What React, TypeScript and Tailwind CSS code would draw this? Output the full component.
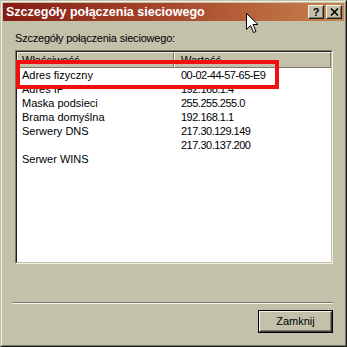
import React from "react";

const rows: [string, string][] = [
  ["Adres fizyczny", "00-02-44-57-65-E9"],
  ["Adres IP", "192.168.1.4"],
  ["Maska podsieci", "255.255.255.0"],
  ["Brama domyślna", "192.168.1.1"],
  ["Serwery DNS", "217.30.129.149"],
  ["", "217.30.137.200"],
  ["Serwer WINS", ""],
];

function CaptionButton({ children }: { children: React.ReactNode }) {
  return (
    <div className="w-[16px] h-[14px] border border-t-[#f4f2e4] border-l-[#f4f2e4] border-r-[#202020] border-b-[#202020] bg-[#c3c1aa]">
      <div className="w-full h-full border border-t-[#c3c1aa] border-l-[#c3c1aa] border-r-[#7a7866] border-b-[#7a7866] flex items-center justify-center">
        {children}
      </div>
    </div>
  );
}

export default function App() {
  return (
    <div
      className="relative w-[347px] h-[347px] bg-[#c3c1aa] border border-t-[#c3c1aa] border-l-[#c3c1aa] border-r-[#161616] border-b-[#161616] overflow-hidden"
      style={{ fontFamily: '"Liberation Sans", Arial, sans-serif' }}
    >
      <div className="w-full h-full border border-t-[#f2f0e2] border-l-[#f2f0e2] border-r-[#7c7a68] border-b-[#7c7a68] p-[1px] flex flex-col">
        {/* Title bar */}
        <div className="h-[18px] flex items-center bg-gradient-to-r from-[#861c15] via-[#a8482c] to-[#c8834f] pl-[3px] pr-[2px]">
          <div className="flex-1 text-white font-bold text-[12.5px] leading-[18px] whitespace-nowrap">
            Szczegóły połączenia sieciowego
          </div>
          <div className="flex gap-[2px]">
            <CaptionButton>
              <span className="text-black font-bold text-[11px] leading-none">?</span>
            </CaptionButton>
            <CaptionButton>
              <svg width="9" height="8" viewBox="0 0 9 8">
                <path d="M1 0.5 L8 7.5 M8 0.5 L1 7.5" stroke="#000" strokeWidth="1.6" />
              </svg>
            </CaptionButton>
          </div>
        </div>

        {/* Body */}
        <div className="flex-1 flex flex-col pl-[12px] pr-[11px]">
          <div className="mt-[11px] text-[11px] leading-[13px] text-black whitespace-nowrap tracking-[-0.2px]">
            Szczegóły połączenia sieciowego:
          </div>
          <div className="mt-[5px] w-[318px] h-[214px] border border-t-[#7c7a68] border-l-[#7c7a68] border-r-[#f4f2e4] border-b-[#f4f2e4]">
            <div className="w-full h-full border border-t-[#202020] border-l-[#202020] border-r-[#c3c1aa] border-b-[#c3c1aa] bg-white flex flex-col">
              <div className="grid grid-cols-[157px_1fr] h-[16px] text-[11px] text-black">
                <div className="bg-[#c3c1aa] border border-t-[#f4f2e4] border-l-[#f4f2e4] border-r-[#7c7a68] border-b-[#7c7a68] pl-[4px] leading-[14px]">
                  Właściwość
                </div>
                <div className="bg-[#c3c1aa] border border-t-[#f4f2e4] border-l-[#f4f2e4] border-r-[#7c7a68] border-b-[#7c7a68] pl-[6px] leading-[14px]">
                  Wartość
                </div>
              </div>
              {rows.map(([k, v], i) => (
                <div key={i} className="grid grid-cols-[157px_1fr] h-[14px] text-[11px] leading-[14px] text-black whitespace-nowrap">
                  <div className="pl-[5px]">{k}</div>
                  <div className="pl-[7px] tracking-[-0.5px]">{v}</div>
                </div>
              ))}
            </div>
          </div>

          <div className="mt-[38px] -ml-[3px] w-[321px] border-t border-t-[#7c7a68] border-b border-b-[#f4f2e4]" />

          <div className="mt-[6px] flex justify-end">
            <div className="w-[75px] h-[23px] border border-black">
              <div className="w-full h-full border border-t-[#f4f2e4] border-l-[#f4f2e4] border-r-[#3a3a3a] border-b-[#3a3a3a]">
                <div className="w-full h-full border border-t-[#c3c1aa] border-l-[#c3c1aa] border-r-[#7c7a68] border-b-[#7c7a68] flex items-center justify-center text-[11px] text-black">
                  Zamknij
                </div>
              </div>
            </div>
          </div>
        </div>
      </div>

      {/* Red highlight rectangle */}
      <div className="absolute left-[15px] top-[59px] w-[263px] h-[29px] border-4 border-[#f01010]" />

      {/* Mouse cursor */}
      <svg className="absolute left-[245px] top-[12px]" width="13" height="21" viewBox="0 0 13 21">
        <path
          d="M0.5 0.5 L0.5 16.5 L4.5 12.5 L7.5 19.5 L10 18.5 L7 11.5 L12 11.5 Z"
          fill="#fff"
          stroke="#000"
          strokeWidth="1"
        />
      </svg>
    </div>
  );
}
